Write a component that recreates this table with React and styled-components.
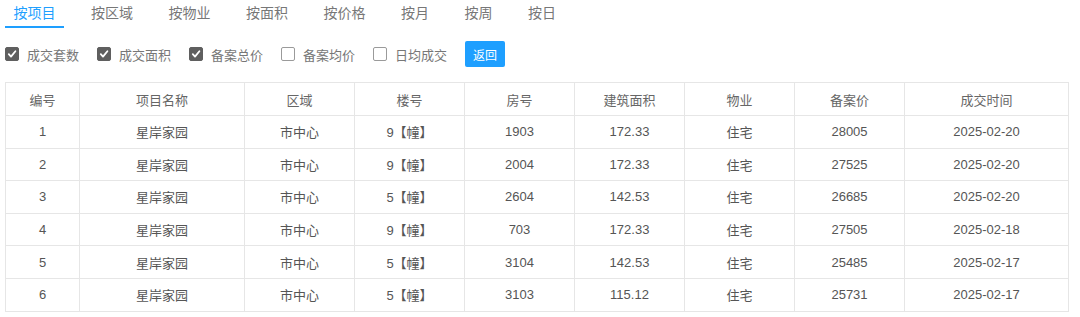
import React from "react";
import styled, { createGlobalStyle } from "styled-components";

const Global = createGlobalStyle`
  html, body { margin: 0; padding: 0; background: #fff; }
  body { font-family: "Liberation Sans", "Noto Sans CJK SC", sans-serif; }
  * { box-sizing: border-box; }
`;

const Page = styled.div`
  padding: 0 12px 0 5px;
  width: 1080px;
`;

const Tabs = styled.div`
  display: flex;
  gap: 18.5px;
  height: 28px;
`;

const Tab = styled.div`
  padding: 0 8.5px;
  height: 28px;
  line-height: 26px;
  font-size: 14px;
  color: ${(p) => (p.$active ? "#1e9fff" : "#777")};
  border-bottom: 2px solid ${(p) => (p.$active ? "#1e9fff" : "transparent")};
  white-space: nowrap;
`;

const Filters = styled.div`
  display: flex;
  align-items: center;
  gap: 18px;
  height: 26px;
  margin-top: 13px;
`;

const Check = styled.label`
  display: flex;
  align-items: center;
  gap: 8px;
  font-size: 13px;
  color: #777;
  white-space: nowrap;
`;

const Box = styled.span`
  width: 14px;
  height: 14px;
  border-radius: 2px;
  display: flex;
  align-items: center;
  justify-content: center;
  background: ${(p) => (p.$checked ? "#5f5f5f" : "#fff")};
  border: 1px solid ${(p) => (p.$checked ? "#5f5f5f" : "#9a9a9a")};
`;

const Button = styled.button`
  height: 26px;
  width: 40px;
  border: none;
  border-radius: 2px;
  background: #1e9fff;
  color: #fff;
  font-size: 12px;
  font-family: inherit;
  padding: 0;
`;

const Table = styled.table`
  margin-top: 15px;
  border-collapse: collapse;
  width: 1063px;
  table-layout: fixed;
  font-size: 13px;
`;

const Th = styled.th`
  height: 33px;
  border: 1px solid #e6e6e6;
  font-weight: normal;
  color: #666;
  text-align: center;
  padding: 0;
`;

const Td = styled.td`
  height: 32.6px;
  border: 1px solid #e6e6e6;
  color: #555;
  text-align: center;
  padding: 0;
`;

const Tick = () => (
  <svg width="10" height="10" viewBox="0 0 10 10">
    <path d="M1.8 5.2 L4 7.6 L8.4 2.2" fill="none" stroke="#fff" strokeWidth="1.8" strokeLinecap="round" strokeLinejoin="round" />
  </svg>
);

const tabs = ["按项目", "按区域", "按物业", "按面积", "按价格", "按月", "按周", "按日"];
const filters = [
  ["成交套数", true],
  ["成交面积", true],
  ["备案总价", true],
  ["备案均价", false],
  ["日均成交", false],
];
const cols = [
  ["编号", 74],
  ["项目名称", 165],
  ["区域", 110],
  ["楼号", 110],
  ["房号", 110],
  ["建筑面积", 110],
  ["物业", 110],
  ["备案价", 110],
  ["成交时间", 164],
];
const rows = [
  ["1", "星岸家园", "市中心", "9【幢】", "1903", "172.33", "住宅", "28005", "2025-02-20"],
  ["2", "星岸家园", "市中心", "9【幢】", "2004", "172.33", "住宅", "27525", "2025-02-20"],
  ["3", "星岸家园", "市中心", "5【幢】", "2604", "142.53", "住宅", "26685", "2025-02-20"],
  ["4", "星岸家园", "市中心", "9【幢】", "703", "172.33", "住宅", "27505", "2025-02-18"],
  ["5", "星岸家园", "市中心", "5【幢】", "3104", "142.53", "住宅", "25485", "2025-02-17"],
  ["6", "星岸家园", "市中心", "5【幢】", "3103", "115.12", "住宅", "25731", "2025-02-17"],
];

export default function App() {
  return (
    <Page>
      <Global />
      <Tabs>
        {tabs.map((t, i) => (
          <Tab key={t} $active={i === 0}>{t}</Tab>
        ))}
      </Tabs>
      <Filters>
        {filters.map(([label, checked]) => (
          <Check key={label}>
            <Box $checked={checked}>{checked && <Tick />}</Box>
            {label}
          </Check>
        ))}
        <Button>返回</Button>
      </Filters>
      <Table>
        <colgroup>
          {cols.map(([n, w]) => (
            <col key={n} style={{ width: w }} />
          ))}
        </colgroup>
        <thead>
          <tr>
            {cols.map(([n]) => (
              <Th key={n}>{n}</Th>
            ))}
          </tr>
        </thead>
        <tbody>
          {rows.map((r) => (
            <tr key={r[0]}>
              {r.map((c, j) => (
                <Td key={j}>{c}</Td>
              ))}
            </tr>
          ))}
        </tbody>
      </Table>
    </Page>
  );
}
